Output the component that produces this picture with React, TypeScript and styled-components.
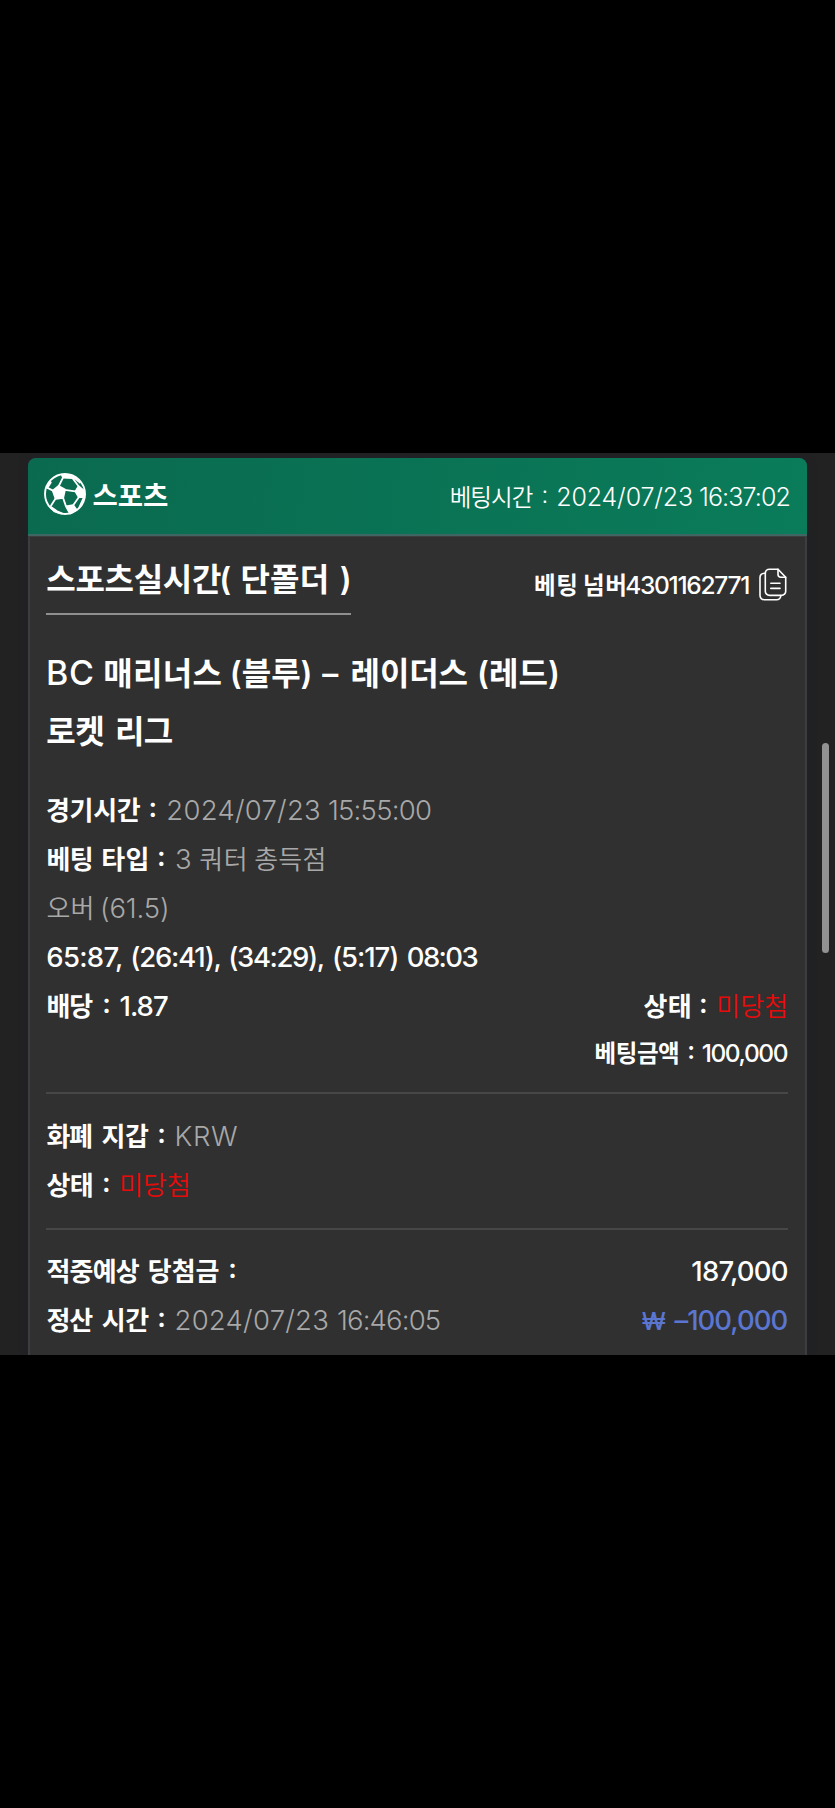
import React from 'react';
import styled, { createGlobalStyle } from 'styled-components';

const GlobalStyle = createGlobalStyle`
  body {
    margin: 0;
    background: #000;
    color: #fff;
    font-family: Inter, 'Noto Sans CJK KR', sans-serif;
    font-feature-settings: 'calt' 0;
  }
`;

const Screen = styled.main`
  box-sizing: border-box;
  width: 835px;
  height: 1808px;
  padding-top: 453px;
  background: #000;
`;

const Viewport = styled.div`
  position: relative;
  box-sizing: border-box;
  height: 902px;
  padding: 5px 28px 0;
  background: #222223;
  overflow: hidden;
`;

const ScrollThumb = styled.div`
  position: absolute;
  top: 289.5px;
  right: 6px;
  width: 7px;
  height: 210px;
  border-radius: 4px;
  background: #929292;
`;

const Card = styled.article`
  display: flex;
  flex-direction: column;
  height: 940px;
  border-radius: 8px 8px 0 0;
  box-shadow: 0 0 8px rgba(32, 33, 42, 0.9);
  background: #303030;
`;

const CardHeader = styled.header`
  display: flex;
  align-items: center;
  height: 76px;
  padding: 0 17px 0 16px;
  border-bottom: 2px solid #3f6663;
  border-radius: 8px 8px 0 0;
  background: linear-gradient(100deg, #0a6a4f, #0a7c5a);
`;

const CardBody = styled.div`
  flex: 1;
  padding: 10px 17px 0 16px;
  border: solid #3d3d40;
  border-width: 1px 2px 0;
`;

const BallIcon = styled.svg`
  width: 42px;
  height: 42px;
  margin-bottom: 4px;
`;

const CopyIcon = styled.svg`
  width: 28px;
  height: 33px;
  margin: 0 1px 3px 10px;
`;

const Line = styled.div<{ $size: number; $height: number }>`
  display: flex;
  font-size: ${(p) => p.$size}px;
  line-height: ${(p) => p.$height}px;
`;

const Group = styled.div<{ $end?: number }>`
  white-space: pre;
  ${(p) => p.$end !== undefined && `margin-left: auto; margin-right: ${p.$end}px;`}
`;

const HeaderTime = styled(Group)`
  padding-top: 1px;
  font-size: 25px;
  line-height: 40px;
`;

const HeaderTitle = styled(Group)`
  padding-top: 1px;
  font-size: 27px;
  line-height: 40px;
`;

const TitleRow = styled.div`
  display: flex;
  justify-content: space-between;
  align-items: flex-start;
  margin-bottom: 28.5px;
`;

const Title = styled.h1`
  width: 305px;
  margin: 0;
  border-bottom: 2px solid #8f8f8f;
  font-size: 31px;
  font-weight: 600;
  line-height: 66px;
  white-space: pre;
`;

const BetNumber = styled.div`
  display: flex;
  align-items: center;
  padding-top: 9px;
  font-size: 24.5px;
  line-height: 59px;
`;

const Teams = styled.section`
  margin-bottom: 25px;
`;

const Divider = styled.hr<{ $before: number; $after: number }>`
  height: 2px;
  margin: ${(p) => p.$before}px 0 ${(p) => p.$after}px;
  border: 0;
  background: #474747;
`;

type Tone = 'plain' | 'muted' | 'lost' | 'loss';
const tones: Record<Tone, string> = {
  plain: '#fff',
  muted: '#a8a8a8',
  lost: '#e60b0b',
  loss: '#5b76d0',
};

const Word = styled.span<{ $size: number; $weight: number; $track?: number; $gap?: number; $tone?: Tone }>`
  margin-left: ${(p) => p.$gap ?? 0}px;
  color: ${(p) => tones[p.$tone ?? 'plain']};
  font-size: ${(p) => p.$size}px;
  font-weight: ${(p) => p.$weight};
  letter-spacing: ${(p) => p.$track ?? 0}px;
  line-height: 0;
`;

const Colon = styled(Word)`
  vertical-align: 3px;
`;

type Props = { t: string; k?: number; g?: number; tone?: Tone };

/* Text roles: label, value, figure, small and heading words */
const Label = ({ t, k = 0, g }: Props) => <Word $size={26} $weight={600} $track={k - 0.8} $gap={g}>{t}</Word>;
const Value = ({ t, k = 0, g, tone = 'muted' }: Props) => <Word $size={26} $weight={350} $track={k - 0.95} $gap={g} $tone={tone}>{t}</Word>;
const ValueNum = ({ t, k, g }: Props) => <Word $size={27.5} $weight={350} $track={k} $gap={g} $tone="muted">{t}</Word>;
const Figure = ({ t, k, g, tone }: Props) => <Word $size={27.5} $weight={500} $track={k} $gap={g} $tone={tone}>{t}</Word>;
const Small = ({ t, k = 0, g }: Props) => <Word $size={23.5} $weight={600} $track={k - 0.85} $gap={g}>{t}</Word>;
const SmallNum = ({ t, k, g }: Props) => <Word $size={24.5} $weight={500} $track={k} $gap={g}>{t}</Word>;
const Heading = ({ t, k = 0, g }: Props) => <Word $size={32} $weight={600} $track={k - 0.8} $gap={g}>{t}</Word>;
const Sep = ({ g, t = ': ' }: { g: number; t?: string }) => <Colon $size={27} $weight={600} $gap={g}>{t}</Colon>;

const Row = ({ children }: { children: React.ReactNode }) => <Line $size={27} $height={49.1}>{children}</Line>;

export default function App() {
  return (
    <Screen>
      <GlobalStyle />
      <Viewport>
        <Card>
          <CardHeader>
            <BallIcon viewBox="0 0 42 42" fill="none" stroke="#fff" strokeWidth="1.8" strokeLinejoin="round">
              <circle cx="21" cy="21" r="20" strokeWidth="1.9" />
              <path fill="#fff" d="M14.6 13 21 16.6 19.2 24.8 11.6 25.8 8.8 17.6Z" />
              <path fill="#fff" d="M34.6 13.2 40.2 18 40.3 24 34.8 24.2 31.4 18.4Z" />
              <path fill="#fff" d="M22 33.4 29.2 32.2 32.5 36.8 26 40.6Z" />
              <path fill="#fff" d="M17.8 1.6 27.5 2.4 28.4 5 19 4.6Z" />
              <path fill="#fff" d="M2.6 14.2 5.8 8.6 6.8 9.4 3.4 14.8Z" />
              <path fill="#fff" d="M6.2 33.4 13 38.2 17.8 40.4 10.4 38.4Z" />
              <path d="M14.6 13.5 19 4.6M9 17.6 3 14.6M20.6 16.8 31.4 18.4M19 24.6 22 33.4M11.6 25.6 6.8 33M28.4 5 34.6 13.2M34.8 24.2 29.2 32.2M28 3 36.5 10M40 24 35 35" />
            </BallIcon>
            <HeaderTitle>
              <Word $size={27.5} $weight={600} $track={0} $gap={6.5}>스포츠</Word>
            </HeaderTitle>
            <HeaderTime $end={0.1}>
              <Word $size={23.5} $weight={350} $track={-0.9}>베팅시간 </Word>
              <Colon $size={24} $weight={350} $gap={3.2}>: </Colon>
              <Word $size={25} $weight={350} $track={-0.15} $gap={1.3}>2024/07/23 </Word>
              <Word $size={25} $weight={350} $track={-0.9} $gap={-0.9}>16:37:02</Word>
            </HeaderTime>
          </CardHeader>
          <CardBody>
            <TitleRow>
              <Title>
                <Heading t="스포츠실시간" k={0.5} g={0.3} />
                <Heading t="( " g={-1.9} />
                <Heading t="단폴더 " k={1} g={2.8} />
                <Heading t=")" g={2.2} />
              </Title>
              <BetNumber>
                <Group>
                  <Small t="베팅 " k={1.3} />
                  <Small t="넘버" k={1.3} g={-1.5} />
                  <SmallNum t="4301162771" k={-1.3} g={-2} />
                </Group>
                <CopyIcon viewBox="0 0 28 33" fill="none" stroke="#fff" strokeWidth="1.6" strokeLinecap="round" strokeLinejoin="round">
                  <path d="M10.5 1.2H19L26.7 9.3V23.2a4.2 4.2 0 0 1-4.2 4.2H10.5a4.2 4.2 0 0 1-4.2-4.2V5.4a4.2 4.2 0 0 1 4.2-4.2Z" />
                  <path d="M19 1.2V6.2a3 3 0 0 0 3 3H26.7" />
                  <path d="M6.3 5.2H5.2A4.2 4.2 0 0 0 1 9.4V27.6a4.2 4.2 0 0 0 4.2 4.2H17.6a4.2 4.2 0 0 0 4.2-4.2" />
                  <path d="M11.8 15.2H21M11.8 20.4H21" />
                </CopyIcon>
              </BetNumber>
            </TitleRow>

            <Teams>
              <Line $size={33} $height={58.5}>
                <Group>
                  <Word $size={34} $weight={500} $track={0.6}>BC </Word>
                  <Heading t="매리너스 " k={1.1} g={-0.9} />
                  <Heading t="(블루) " k={0.8} g={-0.8} />
                  <Word $size={32} $weight={600} $gap={1.6}>– </Word>
                  <Heading t="레이더스 " k={0.7} g={4.3} />
                  <Heading t="(레드)" k={0.8} g={1.2} />
                </Group>
              </Line>
              <Line $size={33} $height={58.5}>
                <Group>
                  <Heading t="로켓 " k={0.3} g={0.3} />
                  <Heading t="리그" k={0.2} g={3.2} />
                </Group>
              </Line>
            </Teams>

            <Row>
              <Group>
                <Label t="경기시간 " k={0.5} />
                <Sep g={1.7} />
                <ValueNum t="2024/07/23 " k={0.25} g={2.5} />
                <ValueNum t="15:55:00" k={-0.75} g={-1} />
              </Group>
            </Row>
            <Row>
              <Group>
                <Label t="베팅 " k={0.3} g={0.4} />
                <Label t="타입 " k={1.3} g={1.9} />
                <Sep g={0} />
                <ValueNum t="3 " g={2.6} />
                <Value t="쿼터 " k={1.4} g={-0.2} />
                <Value t="총득점" k={1.1} g={-1.6} />
              </Group>
            </Row>
            <Row>
              <Group>
                <Value t="오버 " k={1.1} g={0.5} />
                <ValueNum t="(61.5)" k={-0.1} g={-2.2} />
              </Group>
            </Row>
            <Row>
              <Group>
                <Figure t="65:87, " k={-0.7} g={0.3} />
                <Figure t="(26:41), " k={-1.2} g={1.2} />
                <Figure t="(34:29), " k={-1.4} g={1.7} />
                <Figure t="(5:17) " k={-1.1} g={2.8} />
                <Figure t="08:03" k={-1.6} g={2.3} />
              </Group>
            </Row>
            <Row>
              <Group>
                <Label t="배당 " k={-0.4} g={0.5} />
                <Sep g={5} />
                <Figure t="1.87" k={-1} g={1.8} />
              </Group>
              <Group $end={-0.2}>
                <Label t="상태 " k={1.2} />
                <Sep g={0} />
                <Value t="미당첨" k={1} g={1.8} tone="lost" />
              </Group>
            </Row>
            <Line $size={24.5} $height={45}>
              <Group $end={0.8}>
                <Small t="베팅금액 " k={0.4} />
                <Colon $size={24.5} $weight={600} $gap={2.6}>: </Colon>
                <SmallNum t="100,000" k={-1.4} g={0.3} />
              </Group>
            </Line>

            <Divider $before={16.5} $after={17.3} />

            <Row>
              <Group>
                <Label t="화폐 " k={-0.4} g={0.4} />
                <Label t="지갑 " k={0.4} g={4.4} />
                <Sep g={2.4} />
                <ValueNum t="KRW" k={0.7} g={1.8} />
              </Group>
            </Row>
            <Row>
              <Group>
                <Label t="상태 " k={0.2} g={0.4} />
                <Sep g={3} />
                <Value t="미당첨" k={0.8} g={1.8} tone="lost" />
              </Group>
            </Row>

            <Divider $before={17.6} $after={17.6} />

            <Row>
              <Group>
                <Label t="적중예상 " g={0.5} />
                <Label t="당첨금 " k={0.8} g={3} />
                <Sep g={2.2} t=":" />
              </Group>
              <Group $end={0.4}>
                <Figure t="187,000" k={-0.8} />
              </Group>
            </Row>
            <Row>
              <Group>
                <Label t="정산 " k={-0.4} g={0.5} />
                <Label t="시간 " k={0.4} g={4.4} />
                <Sep g={2.4} />
                <ValueNum t="2024/07/23 " k={0.25} g={1.8} />
                <ValueNum t="16:46:05" k={-0.85} g={-0.1} />
              </Group>
              <Group $end={0.8}>
                <Word $size={24.5} $weight={500} $tone="loss">₩ </Word>
                <Figure t="–100,000" k={-1} g={2} tone="loss" />
              </Group>
            </Row>
          </CardBody>
        </Card>
        <ScrollThumb />
      </Viewport>
    </Screen>
  );
}
